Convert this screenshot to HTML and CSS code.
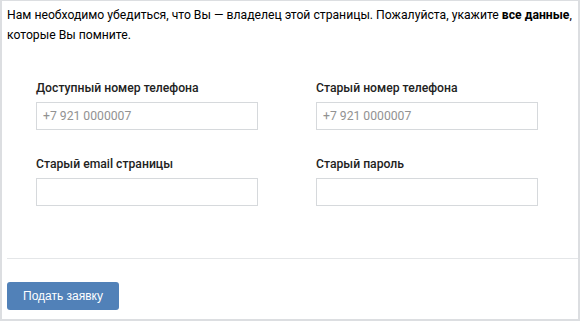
FILE: index.html
```html
<!DOCTYPE html>
<html lang="ru">

<head>
    <meta charset="UTF-8">
    <meta name="viewport" content="width=device-width, initial-scale=1.0">
    <title>Восстановление доступа</title>
    <link rel="stylesheet" href="styles.css">
</head>

<body>

    <div class="restore-box">
        <p class="intro">
            Нам необходимо убедиться, что Вы — владелец этой страницы. Пожалуйста, укажите <strong>все данные</strong>,
            которые Вы помните.
        </p>

        <form class="restore-form" action="#" method="POST">
            <div class="field">
                <label for="phone">Доступный номер телефона</label>
                <input type="text" id="phone" name="phone" placeholder="+7 921 0000007">
            </div>
            <div class="field">
                <label for="oldPhone">Старый номер телефона</label>
                <input type="text" id="oldPhone" name="old_phone" placeholder="+7 921 0000007">
            </div>
            <div class="field">
                <label for="oldEmail">Старый email страницы</label>
                <input type="text" id="oldEmail" name="old_email">
            </div>
            <div class="field">
                <label for="oldPass">Старый пароль</label>
                <input type="password" id="oldPass" name="old_pass">
            </div>
        </form>

        <div class="divider"></div>

        <div class="actions">
            <button type="submit">Подать заявку</button>
        </div>
    </div>

</body>

</html>
```

FILE: styles.css
```css
body {
    margin: 0;
    font-family: Roboto, 'Liberation Sans', sans-serif;
    font-size: 12.2px;
    color: #000;
    background-color: #fff;
}

.restore-box {
    width: 580px;
    height: 321px;
    box-sizing: border-box;
    border: 2px solid #dcdee1;
    border-top-width: 1px;
    border-bottom-width: 2px;
    background-color: #fff;
}

.intro {
    margin: 0;
    padding: 4px 5px 0;
    line-height: 20px;
}

.intro strong {
    font-weight: 700;
}

.restore-form {
    display: grid;
    grid-template-columns: 222px 222px;
    column-gap: 58px;
    row-gap: 26px;
    padding: 35px 0 0 34px;
}

.field label {
    display: block;
    line-height: 16px;
    margin-bottom: 6px;
    color: #222;
    font-weight: 500;
}

.field input {
    display: block;
    width: 100%;
    height: 28px;
    box-sizing: border-box;
    padding: 0 6px;
    border: 1px solid #d6d9dc;
    font-family: inherit;
    font-size: 12.2px;
    color: #000;
    background-color: #fff;
    outline: none;
}

.field input::placeholder {
    color: #929292;
}

.divider {
    height: 1px;
    margin: 52px 0 0 5px;
    background-color: #e4e6e8;
}

.actions {
    padding: 23px 0 0 5px;
}

.actions button {
    height: 28px;
    padding: 0 16px;
    border: none;
    border-radius: 3px;
    background-color: #5181b8;
    color: #fff;
    font-family: 'Liberation Sans', Arial, sans-serif;
    font-size: 12px;
    cursor: pointer;
}
```
